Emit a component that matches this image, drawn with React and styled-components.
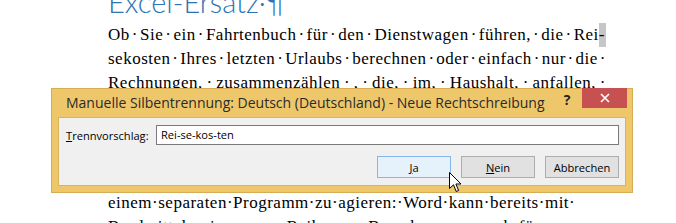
import React from "react";
import styled, { createGlobalStyle } from "styled-components";

const GlobalStyle = createGlobalStyle`
    html, body {
        margin: 0;
        padding: 0;
        background: #fff;
        overflow: hidden;
    }
`;

const uiFont = `"Open Sans", "Noto Sans", sans-serif`;

const Page = styled.div`
    position: relative;
    width: 676px;
    height: 223px;
    overflow: hidden;
    background: #fff;
    padding-left: 108px;
    box-sizing: border-box;
`;

const Heading = styled.h1`
    margin: -19px 0 0;
    height: 42px;
    font: 300 29px/42px Lato, "Liberation Sans", sans-serif;
    color: #2e74b5;
    white-space: nowrap;
`;

const Body = styled.div`
    font: 17px/24px "Liberation Serif", serif;
    letter-spacing: 0.5px;
    color: #000;
`;

const TextLine = styled.div`
    display: flex;
    width: ${(p) => (p.$justify ? "498px" : "auto")};
    justify-content: ${(p) => (p.$justify ? "space-between" : "flex-start")};
    white-space: nowrap;
`;

const Word = styled.span``;

const Dot = styled.span``;

const Marked = styled.span`
    display: inline-block;
    background: #c6c6c6;
    padding-right: 1px;
`;

const Line = ({ text, justify, markHyphen }) => {
    const words = text.split("·");
    const items = [];
    words.forEach((w, i) => {
        if (w) {
            if (markHyphen && i === words.length - 1 && w.endsWith("-")) {
                items.push(
                    <Word key={"w" + i}>
                        {w.slice(0, -1)}
                        <Marked>-</Marked>
                    </Word>
                );
            } else {
                items.push(<Word key={"w" + i}>{w}</Word>);
            }
        }
        if (i < words.length - 1) items.push(<Dot key={"d" + i}>·</Dot>);
    });
    return <TextLine $justify={justify}>{items}</TextLine>;
};

const Dialog = styled.div`
    position: absolute;
    left: 51px;
    top: 88px;
    width: 582px;
    height: 105px;
    box-sizing: border-box;
    background: #efc76b;
    border: 1px solid #d6ad55;
    display: flex;
    flex-direction: column;
    font-family: ${uiFont};
`;

const TitleBar = styled.div`
    height: 28px;
    display: flex;
    align-items: flex-start;
    padding-left: 14px;
`;

const Title = styled.div`
    flex: 1;
    font-size: 14px;
    line-height: 28px;
    color: #2a2a2a;
    white-space: nowrap;
`;

const Help = styled.div`
    width: 14px;
    margin-right: 8px;
    font: bold 14px/22px ${uiFont};
    color: #222;
    text-align: center;
`;

const Close = styled.div`
    width: 45px;
    height: 20px;
    margin-top: -1px;
    margin-right: 5px;
    background: #c75050;
    display: flex;
    align-items: center;
    justify-content: center;
`;

const Client = styled.div`
    flex: 1;
    margin: 0 6px 6px;
    background: #f0f0f0;
    border: 1px solid #d9b460;
    padding: 7px 6px 0;
    display: flex;
    flex-direction: column;
    gap: 11px;
    font-size: 11.1px;
    color: #000;
`;

const Row = styled.div`
    display: flex;
    align-items: center;
    justify-content: ${(p) => (p.$end ? "flex-end" : "flex-start")};
    gap: ${(p) => (p.$end ? "10px" : "0")};
`;

const Label = styled.label`
    width: 90px;
    padding-left: 1px;
    white-space: nowrap;
`;

const Input = styled.div`
    flex: 1;
    height: 20px;
    box-sizing: border-box;
    background: #fff;
    border: 1px solid #7a7a7a;
    padding-left: 4px;
    line-height: 18px;
`;

const Button = styled.div`
    width: 74px;
    height: 22px;
    box-sizing: border-box;
    border: 1px solid ${(p) => (p.$primary ? "#86b7ea" : "#adadad")};
    background: ${(p) => (p.$primary ? "#e5f1fb" : "#e1e1e1")};
    display: flex;
    align-items: center;
    justify-content: center;
`;

const Key = styled.span`
    text-decoration: underline;
`;

const Cursor = styled.svg`
    position: absolute;
    left: 449px;
    top: 172px;
`;

const App = () => (
    <>
        <GlobalStyle />
        <Page>
            <Heading>Excel-Ersatz·¶</Heading>
            <Body>
                <Line justify markHyphen text="Ob·Sie·ein·Fahrtenbuch·für·den·Dienstwagen·führen,·die·Rei-" />
                <Line justify text="sekosten·Ihres·letzten·Urlaubs·berechnen·oder·einfach·nur·die·" />
                <Line justify text="Rechnungen,·zusammenzählen·,·die,·im,·Haushalt,·anfallen,·" />
                <Line text="Excel·ist·für·diese·Aufgaben·nicht·zwingend·nötig.·Statt·mit·" />
                <Line text="Zahlen·und·Formeln·in·einer·Tabellenkalkulation·und·damit·in·" />
                <Line text="einer·weiteren·Anwendung·zu·hantieren,·genügt·es·oft·statt·in·" />
                <Line text="der·gewohnten·Umgebung·zu·bleiben,·anstatt·ständig·mit·" />
                <Line text="einem·separaten·Programm·zu·agieren:·Word·kann·bereits·mit·" />
                <Line text="Bordmitteln·eine·ganze·Reihe·von·Berechnungen·auch·für·" />
            </Body>

            <Dialog>
                <TitleBar>
                    <Title>Manuelle Silbentrennung: Deutsch (Deutschland) - Neue Rechtschreibung</Title>
                    <Help>?</Help>
                    <Close>
                        <svg width="10" height="10" viewBox="0 0 10 10">
                            <path d="M1 1 L9 9 M9 1 L1 9" stroke="#fff" strokeWidth="1.6" />
                        </svg>
                    </Close>
                </TitleBar>
                <Client>
                    <Row>
                        <Label>
                            <Key>T</Key>rennvorschlag:
                        </Label>
                        <Input>Rei-se-kos-ten</Input>
                    </Row>
                    <Row $end>
                        <Button $primary>
                            <Key>J</Key>a
                        </Button>
                        <Button>
                            <Key>N</Key>ein
                        </Button>
                        <Button>Abbrechen</Button>
                    </Row>
                </Client>
            </Dialog>

            <Cursor width="13" height="21" viewBox="0 0 13 21">
                <path
                    d="M0.5 0.5 L0.5 16.5 L4.5 12.8 L7.2 19.5 L9.6 18.5 L6.9 12 L12 12 Z"
                    fill="#fff"
                    stroke="#000"
                    strokeWidth="1"
                    strokeLinejoin="miter"
                />
            </Cursor>
        </Page>
    </>
);

export default App;
